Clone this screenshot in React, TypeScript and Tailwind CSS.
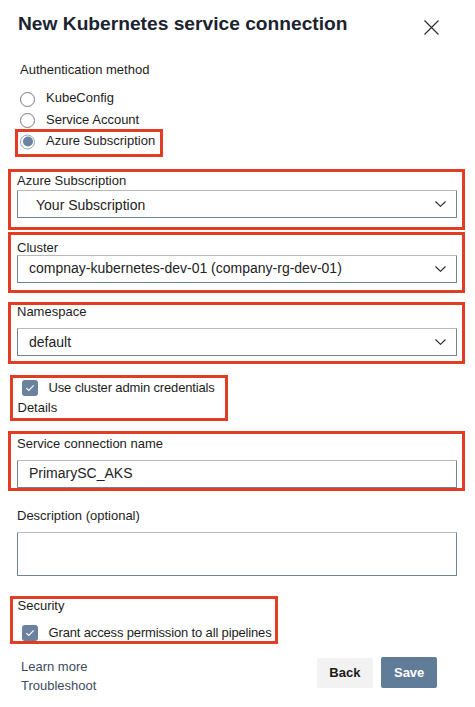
import React from "react";

const Chevron = () => (
  <svg width="11" height="6" viewBox="0 0 11 6" fill="none">
    <path d="M0.5 0.5 L5.5 5.3 L10.5 0.5" stroke="#222" strokeWidth="1.1" />
  </svg>
);

const Check = () => (
  <svg width="10" height="8" viewBox="0 0 10 8" fill="none">
    <path d="M1.3 4.2 L3.8 6.5 L8.7 1.3" stroke="#fff" strokeWidth="1.1" />
  </svg>
);

function Select({ value, textClass = "" }: { value: string; textClass?: string }) {
  return (
    <div className="flex h-[28px] items-center justify-between rounded-[1px] border border-[#6f8399] border-t-[#b9b9b9] pr-[10px] text-[14px] text-[#222]">
      <span className={textClass}>{value}</span>
      <Chevron />
    </div>
  );
}

function Radio({ checked, label }: { checked?: boolean; label: string }) {
  return (
    <div className="flex items-center gap-[11px]">
      {checked ? (
        <span className="flex h-[15px] w-[15px] translate-y-[0.5px] items-center justify-center rounded-full border border-[#9aa8b9] bg-white">
          <span className="h-[10px] w-[10px] rounded-full bg-[#6c84a0]" />
        </span>
      ) : (
        <span className="h-[15px] w-[15px] translate-y-[1px] rounded-full border border-[#7c7c7c] bg-white" />
      )}
      <span className="text-[13px] leading-[16px]">{label}</span>
    </div>
  );
}

function CheckRow({ label }: { label: string }) {
  return (
    <div className="flex items-center gap-[10.5px]">
      <span className="flex h-[16px] w-[16px] items-center justify-center rounded-[3px] bg-[#6a829e]">
        <Check />
      </span>
      <span className="text-[13px] leading-[16px] tracking-[-0.15px]">{label}</span>
    </div>
  );
}

export default function App() {
  return (
    <div className="h-[707px] w-[475px] overflow-hidden bg-white pl-[17px] pr-[18px] font-['Liberation_Sans',Arial,sans-serif] text-[#1d1d1d]">
      {/* Header */}
      <div className="flex items-start justify-between pt-[12px]">
        <h1 className="ml-[1px] text-[19.2px] font-bold leading-[24px] text-[#1c2330]">
          New Kubernetes service connection
        </h1>
        <svg className="mr-[18px] mt-[8px]" width="15" height="15" viewBox="0 0 15 15" fill="none">
          <path d="M0.5 0.5 L14.5 14.5 M14.5 0.5 L0.5 14.5" stroke="#2a2f36" strokeWidth="1.2" />
        </svg>
      </div>

      {/* Authentication method */}
      <div className="ml-[3px] mt-[25.5px] text-[13px] leading-[16px]">Authentication method</div>
      <div className="ml-[3px] mt-[9.75px] flex flex-col">
        <div className="flex h-[21.5px] items-center">
          <Radio label="KubeConfig" />
        </div>
        <div className="flex h-[21.5px] items-center">
          <Radio label="Service Account" />
        </div>
        <div className="-ml-[5px] -mt-[1.25px] w-fit border-[3px] border-[#e23d22] pb-[3.5px] pl-[2px] pr-[5px]">
          <div className="flex h-[18px] items-center">
            <Radio checked label="Azure Subscription" />
          </div>
        </div>
      </div>

      {/* Azure Subscription */}
      <div className="-ml-[9px] -mr-[8px] mt-[12.5px] border-[3px] border-[#e23d22] pb-[9px] pl-[6px] pr-[5px] pt-[2px]">
        <div className="text-[13px] leading-[14px]">Azure Subscription</div>
        <div className="mt-[1.5px]">
          <Select value="Your Subscription" textClass="pl-[18px] pt-[3px]" />
        </div>
      </div>

      {/* Cluster */}
      <div className="-ml-[9px] -mr-[8px] mt-[2.5px] border-[3px] border-[#e23d22] pb-[7px] pl-[6px] pr-[5px] pt-[5.5px]">
        <div className="text-[13px] leading-[14px]">Cluster</div>
        <div className="mt-0">
          <Select value="compnay-kubernetes-dev-01 (company-rg-dev-01)" textClass="pl-[11px]" />
        </div>
      </div>

      {/* Namespace */}
      <div className="-ml-[9px] -mr-[8px] mt-[9.5px] border-[3px] border-[#e23d22] pb-[4.5px] pl-[6px] pr-[5px] pt-0">
        <div className="text-[13px] leading-[14px]">Namespace</div>
        <div className="mt-[9px]">
          <Select value="default" textClass="pl-[11px]" />
        </div>
      </div>

      {/* Use cluster admin credentials */}
      <div className="-ml-[7px] mt-[11px] w-fit border-[3px] border-[#e23d22] pb-[2px] pl-[4.5px] pr-[10px]">
        <div className="flex h-[20px] items-center pl-[4.5px]">
          <CheckRow label="Use cluster admin credentials" />
        </div>
        <div className="mt-[2px] text-[13px] leading-[16px]">Details</div>
      </div>

      {/* Service connection name */}
      <div className="-ml-[9px] -mr-[8px] mt-[10.7px] border-[3px] border-[#e23d22] pl-[6px] pr-[5px] pt-[2.8px]">
        <div className="text-[13px] leading-[14px]">Service connection name</div>
        <div className="mt-[9px] flex h-[28px] items-center rounded-[1px] border border-[#6f8399] border-t-[#b9b9b9] pl-[11px] text-[14px] text-[#222]">
          PrimarySC_AKS
        </div>
      </div>

      {/* Description */}
      <div className="mt-[18.5px] text-[13px] leading-[14px]">Description (optional)</div>
      <div className="mt-[9px] h-[43.5px] rounded-[1px] border border-[#6f8399] border-t-[#b9b9b9]" />

      {/* Security */}
      <div className="-ml-[7px] mt-[20px] w-fit border-[3px] border-[#e23d22] pl-[4.5px] pr-[3px] pt-[0.5px]">
        <div className="text-[13px] leading-[14px]">Security</div>
        <div className="mt-[11.2px] flex h-[16px] items-center pl-[4.5px]">
          <CheckRow label="Grant access permission to all pipelines" />
        </div>
      </div>

      {/* Footer */}
      <div className="mt-[13.3px] flex items-start justify-between pr-[20px]">
        <div className="ml-[4px] flex flex-col text-[13px] leading-[19px] text-[#3d4c60]">
          <span>Learn more</span>
          <span>Troubleshoot</span>
        </div>
        <div className="flex items-center gap-[8.7px]">
          <button className="mt-[1px] flex h-[29.5px] w-[55.6px] items-center justify-center rounded-[2px] bg-[#f2f2f2] text-[13px] font-bold text-[#1a1a1a]">
            Back
          </button>
          <button className="flex h-[30.6px] w-[55.7px] items-center justify-center rounded-[2px] bg-[#607c99] text-[13px] font-bold text-white">
            Save
          </button>
        </div>
      </div>
    </div>
  );
}
